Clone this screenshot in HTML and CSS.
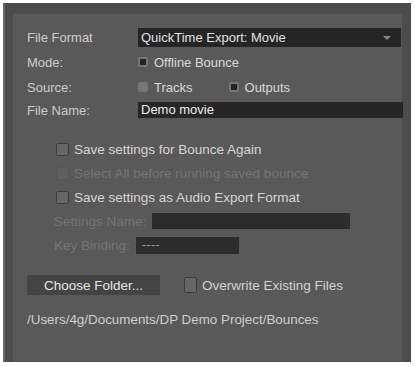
FILE: index.html
```html
<!DOCTYPE html>
<html lang="en">
<head>
    <meta charset="UTF-8">
    <title>Bounce Settings</title>
    <link rel="stylesheet" href="styles.css">
</head>
<body>
<div class="frame">
  <div class="panel">
    <div class="grid">
      <div class="label">File Format</div>
      <div class="select">QuickTime Export: Movie<span class="arrow"></span></div>

      <div class="label">Mode:</div>
      <div class="opts"><span class="cb small on"></span>Offline Bounce</div>

      <div class="label">Source:</div>
      <div class="opts"><span class="cb small fill"></span><span class="opt">Tracks</span><span class="cb small on"></span>Outputs</div>

      <div class="label">File Name:</div>
      <div class="field">Demo movie</div>
    </div>

    <div class="checks">
      <div class="row"><span class="cb"></span>Save settings for Bounce Again</div>
      <div class="row off"><span class="cb dim"></span>Select All before running saved bounce</div>
      <div class="row"><span class="cb"></span>Save settings as Audio Export Format</div>
      <div class="row off"><span class="sub-label">Settings Name:</span><span class="box name"></span></div>
      <div class="row off"><span class="sub-label">Key Binding:</span><span class="box key">----</span></div>
    </div>

    <div class="folder">
      <button class="btn">Choose Folder...</button>
      <span class="cb"></span>Overwrite Existing Files
    </div>
    <div class="path">/Users/4g/Documents/DP Demo Project/Bounces</div>
  </div>
</div>
</body>
</html>
```

FILE: styles.css
```css
body {margin: 0; background: #fff; font-family: "Liberation Sans", Arial, sans-serif; font-size: 13px; color: #d6d6d6;}
.frame {margin: 3px 4px 0 3px; height: 359px; background: #4c4c4c; padding: 11px 9px 0 8px; box-sizing: border-box; border-left: 2px solid #6a6a6a;}
.panel {background: #595959; height: 100%; padding: 14px 0 0 14px; box-sizing: border-box;}
.grid {display: grid; grid-template-columns: 111px 265px; grid-template-rows: 19px 20px 20px 16px; row-gap: 5px; align-items: center;}
.label {color: #cdcdcd;}
.select {background: #252525; height: 19px; line-height: 19px; padding-left: 3px; color: #e2e2e2; position: relative; width: 260px;}
.arrow {position: absolute; right: 10px; top: 8px; border-left: 4px solid transparent; border-right: 4px solid transparent; border-top: 4px solid #888;}
.opts {display: flex; align-items: center; color: #dadada;}
.opt {margin-right: 36px;}
.field {background: #262626; height: 16px; line-height: 16px; padding-left: 3px; color: #eee;}
.cb {display: inline-block; width: 11px; height: 11px; border: 1px solid #3a3a3a; border-radius: 2px; background: #666; margin-right: 6px; box-sizing: border-box; flex: none;}
.cb.small {width: 10px; height: 10px;}
.cb.on {background: #222; border: 2px solid #777;}
.cb.fill {background: #777; border-color: #777;}
.cb.dim {border-color: #555; background: #5e5e5e;}
.checks {margin: 19px 0 0 29px;}
.checks .cb {width: 13px; height: 13px; margin-right: 5px;}
.row {display: flex; align-items: center; height: 24px; font-size: 13.5px;}
.row.off {color: #767676;}
.sub-label {margin-left: -2px; margin-right: 6px;}
.box {background: #2c2c2c; height: 16px; line-height: 16px; padding-left: 6px; color: #999;}
.box.name {width: 192px;}
.box.key {width: 97px; height: 17px;}
.folder {display: flex; align-items: center; margin-top: 18px; color: #d2d2d2; font-size: 13.5px;}
.btn {background: #444; color: #e6e6e6; border: none; width: 133px; height: 20px; margin: 0 24px 0 0; font: inherit; padding: 0;}
.folder .cb {width: 13px; height: 16px; margin-right: 5px;}
.path {margin-top: 17px; color: #cfcfcf; font-size: 13.4px;}
```
